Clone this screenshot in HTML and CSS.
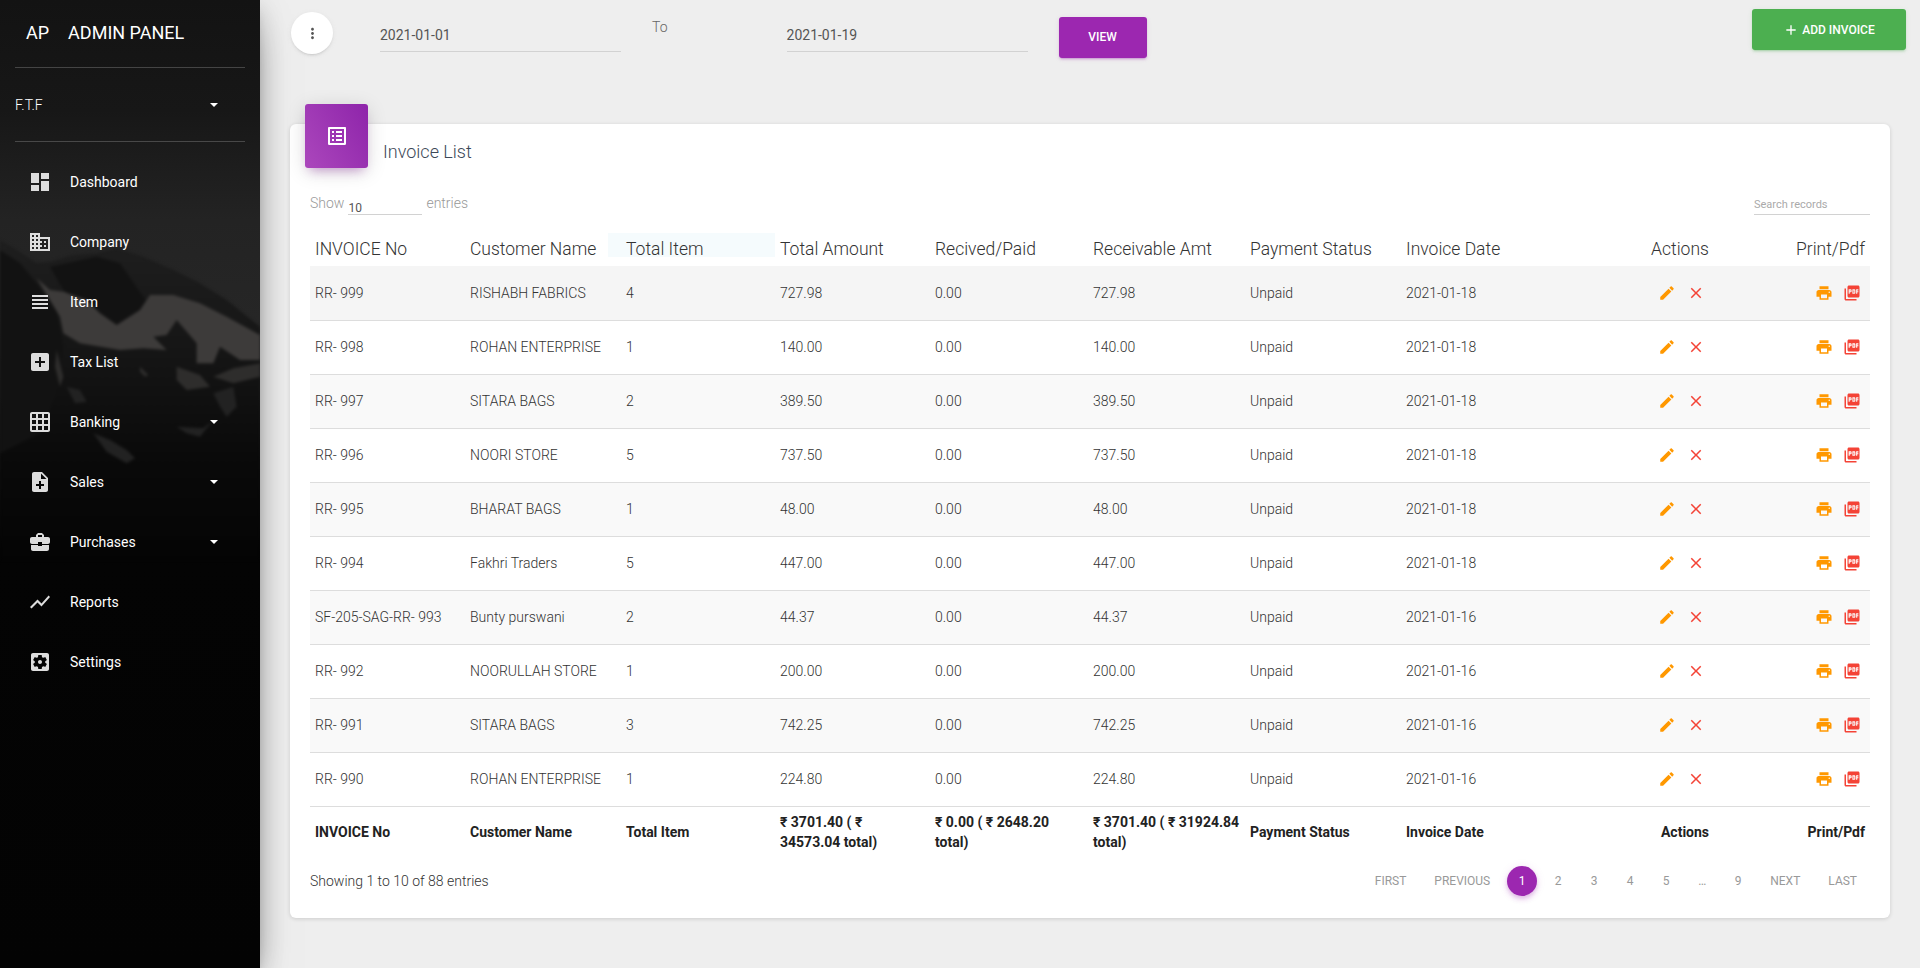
FILE: index.html
```html
<!DOCTYPE html>
<html>
<head>
    <meta charset="UTF-8">
    <meta name="viewport" content="width=device-width, initial-scale=1.0">
    <title>Invoice List</title>
    <link rel="stylesheet" href="styles.css">
</head>
<body>
    <!-- Iconos usados en toda la pagina -->
    <svg class="icon-defs" width="0" height="0">
        <defs>
            <linearGradient id="rock-fade" x1="0" y1="0" x2="0" y2="1">
                <stop offset="0" stop-color="#1e1e1e"/>
                <stop offset="0.35" stop-color="#151515"/>
                <stop offset="0.7" stop-color="#090909"/>
                <stop offset="1" stop-color="#040404"/>
            </linearGradient>
        </defs>
        <symbol id="i-dashboard" viewBox="0 0 24 24"><path d="M3 13h8V3H3v10zm0 8h8v-6H3v6zm10 0h8V11h-8v10zm0-18v6h8V3h-8z"/></symbol>
        <symbol id="i-domain" viewBox="0 0 24 24"><path d="M12 7V3H2v18h20V7H12zM6 19H4v-2h2v2zm0-4H4v-2h2v2zm0-4H4V9h2v2zm0-4H4V5h2v2zm4 12H8v-2h2v2zm0-4H8v-2h2v2zm0-4H8V9h2v2zm0-4H8V5h2v2zm10 12h-8v-2h2v-2h-2v-2h2v-2h-2V9h8v10zm-2-8h-2v2h2v-2zm0 4h-2v2h2v-2z"/></symbol>
        <symbol id="i-headline" viewBox="0 0 24 24"><path d="M4 15h16v-2H4v2zm0 4h16v-2H4v2zm0-8h16V9H4v2zm0-6v2h16V5H4z"/></symbol>
        <symbol id="i-addbox" viewBox="0 0 24 24"><path d="M19 3H5c-1.11 0-2 .9-2 2v14c0 1.1.89 2 2 2h14c1.1 0 2-.9 2-2V5c0-1.1-.9-2-2-2zm-2 10h-4v4h-2v-4H7v-2h4V7h2v4h4v2z"/></symbol>
        <symbol id="i-grid" viewBox="0 0 24 24"><path d="M20 2H4c-1.1 0-2 .9-2 2v16c0 1.1.9 2 2 2h16c1.1 0 2-.9 2-2V4c0-1.1-.9-2-2-2zM8 20H4v-4h4v4zm0-6H4v-4h4v4zm0-6H4V4h4v4zm6 12h-4v-4h4v4zm0-6h-4v-4h4v4zm0-6h-4V4h4v4zm6 12h-4v-4h4v4zm0-6h-4v-4h4v4zm0-6h-4V4h4v4z"/></symbol>
        <symbol id="i-noteadd" viewBox="0 0 24 24"><path d="M14 2H6c-1.1 0-1.99.9-1.99 2L4 20c0 1.1.89 2 1.99 2H18c1.1 0 2-.9 2-2V8l-6-6zm2 14h-3v3h-2v-3H8v-2h3v-3h2v3h3v2zm-3-7V3.5L18.5 9H13z"/></symbol>
        <symbol id="i-case" viewBox="0 0 24 24"><path d="M10 16v-1H3.01L3 19c0 1.11.89 2 2 2h14c1.11 0 2-.89 2-2v-4h-7v1h-4zm10-9h-4.01V5l-2-2h-4l-2 2v2H4c-1.1 0-2 .9-2 2v3c0 1.11.89 2 2 2h6v-2h4v2h6c1.1 0 2-.9 2-2V9c0-1.1-.9-2-2-2zm-6 0h-4V5h4v2z"/></symbol>
        <symbol id="i-chart" viewBox="0 0 24 24"><path d="M3.5 18.49l6-6.01 4 4L22 6.92l-1.41-1.41-7.09 7.97-4-4L2 16.99z"/></symbol>
        <symbol id="i-settings" viewBox="0 0 24 24"><path d="M12 10c-1.1 0-2 .9-2 2s.9 2 2 2 2-.9 2-2-.9-2-2-2zm7-7H5c-1.11 0-2 .9-2 2v14c0 1.1.89 2 2 2h14c1.11 0 2-.9 2-2V5c0-1.1-.89-2-2-2zm-1.75 9c0 .23-.02.46-.05.68l1.48 1.16c.13.11.17.3.08.45l-1.4 2.42c-.09.15-.27.21-.43.15l-1.74-.7c-.36.28-.76.51-1.18.69l-.26 1.85c-.03.17-.18.3-.35.3h-2.8c-.17 0-.32-.13-.35-.29l-.26-1.85c-.43-.18-.82-.41-1.18-.69l-1.74.7c-.16.06-.34 0-.43-.15l-1.4-2.42c-.09-.15-.05-.34.08-.45l1.48-1.16c-.03-.23-.05-.46-.05-.69 0-.23.02-.46.05-.68l-1.48-1.16c-.13-.11-.17-.3-.08-.45l1.4-2.42c.09-.15.27-.21.43-.15l1.74.7c.36-.28.76-.51 1.18-.69l.26-1.85c.03-.17.18-.3.35-.3h2.8c.17 0 .32.13.35.29l.26 1.85c.43.18.82.41 1.18.69l1.74-.7c.16-.06.34 0 .43.15l1.4 2.42c.09.15.05.34-.08.45l-1.48 1.16c.03.23.05.46.05.69z"/></symbol>
        <symbol id="i-more" viewBox="0 0 24 24"><path d="M12 8c1.1 0 2-.9 2-2s-.9-2-2-2-2 .9-2 2 .9 2 2 2zm0 2c-1.1 0-2 .9-2 2s.9 2 2 2 2-.9 2-2-.9-2-2-2zm0 6c-1.1 0-2 .9-2 2s.9 2 2 2 2-.9 2-2-.9-2-2-2z"/></symbol>
        <symbol id="i-listalt" viewBox="0 0 24 24"><path d="M19 5v14H5V5h14m1.1-2H3.9c-.5 0-.9.4-.9.9v16.2c0 .4.4.9.9.9h16.2c.4 0 .9-.5.9-.9V3.9c0-.5-.5-.9-.9-.9zM11 7h6v2h-6V7zm0 4h6v2h-6v-2zm0 4h6v2h-6zM7 7h2v2H7zm0 4h2v2H7zm0 4h2v2H7z"/></symbol>
        <symbol id="i-edit" viewBox="0 0 24 24"><path d="M3 17.25V21h3.75L17.81 9.94l-3.75-3.75L3 17.25zM20.71 7.04c.39-.39.39-1.02 0-1.41l-2.34-2.34c-.39-.39-1.02-.39-1.41 0l-1.83 1.83 3.75 3.75 1.83-1.83z"/></symbol>
        <symbol id="i-close" viewBox="0 0 24 24"><path d="M19 6.41L17.59 5 12 10.59 6.41 5 5 6.41 10.59 12 5 17.59 6.41 19 12 13.41 17.59 19 19 17.59 13.41 12z"/></symbol>
        <symbol id="i-print" viewBox="0 0 24 24"><path d="M19 8H5c-1.66 0-3 1.34-3 3v6h4v4h12v-4h4v-6c0-1.66-1.34-3-3-3zm-3 11H8v-5h8v5zm3-7c-.55 0-1-.45-1-1s.45-1 1-1 1 .45 1 1-.45 1-1 1zm-1-9H6v4h12V3z"/></symbol>
        <symbol id="i-pdf" viewBox="0 0 24 24"><path d="M20 2H8c-1.1 0-2 .9-2 2v12c0 1.1.9 2 2 2h12c1.1 0 2-.9 2-2V4c0-1.1-.9-2-2-2zm-8.5 7.5c0 .83-.67 1.5-1.5 1.5H9v2H7.5V7H10c.83 0 1.5.67 1.5 1.5v1zm5 2c0 .83-.67 1.5-1.5 1.5h-2.5V7H15c.83 0 1.5.67 1.5 1.5v3zm4-3H19v1h1.5V11H19v2h-1.5V7h3v1.5zM9 9.5h1v-1H9v1zM4 6H2v14c0 1.1.9 2 2 2h14v-2H4V6zm10 5.5h1v-3h-1v3z"/></symbol>
        <symbol id="i-add" viewBox="0 0 24 24"><path d="M19 13h-6v6h-2v-6H5v-2h6V5h2v6h6v2z"/></symbol>
    </svg>

    <div class="wrapper">
        <aside class="sidebar">
            <!-- Montana de fondo -->
            <svg class="sidebar-bg" viewBox="0 0 780 1020">
                <polygon fill="url(#rock-fade)" points="0,60 50,90 110,130 150,125 220,105 290,100 350,85 430,110 520,150 600,190 680,240 780,320 780,1020 0,1020"/>
                <polygon class="rock-dark" points="0,90 60,130 110,190 170,270 190,380 170,520 120,640 0,700"/>
                <polygon class="rock-dark" points="150,140 290,110 360,130 450,260 350,315 300,280 190,210"/>
                <polygon class="snow" points="110,175 150,210 190,215 260,240 300,280 350,315 420,270 450,225 520,225 600,250 680,290 780,345 780,420 720,420 660,380 640,430 590,430 590,370 530,300 500,345 460,350 500,390 430,385 360,390 240,370 190,340 180,290"/>
                <polygon class="snow-dim" points="640,470 700,445 780,430 780,470 700,490 670,480"/>
                <polygon class="snow-dim" points="530,440 600,465 630,500 560,510 530,480"/>
                <polygon class="snow-dim" points="170,390 190,470 180,500 165,440"/>
                <polygon class="snow-faint" points="200,500 240,510 260,545 225,550"/>
                <polygon class="snow-dim" points="420,440 445,465 435,470 420,455"/>
                <polygon class="snow-faint" points="280,640 330,660 380,690 405,715 380,730 320,695"/>
                <polygon class="snow-faint" points="640,520 700,500 710,560 680,590 660,560"/>
                <polygon class="snow-faint" points="530,620 610,625 640,600 600,650 560,640"/>
            </svg>
            <div class="sidebar-content">
                <div class="brand">
                    <span class="brand-mini">AP</span>
                    <span>ADMIN PANEL</span>
                </div>
                <div class="user-row">
                    <span>F.T.F</span>
                    <span class="caret"></span>
                </div>
                <nav class="nav">
                    <a class="nav-item"><svg class="nav-icon"><use href="#i-dashboard"/></svg><span>Dashboard</span></a>
                    <a class="nav-item"><svg class="nav-icon"><use href="#i-domain"/></svg><span>Company</span></a>
                    <a class="nav-item"><svg class="nav-icon"><use href="#i-headline"/></svg><span>Item</span></a>
                    <a class="nav-item"><svg class="nav-icon"><use href="#i-addbox"/></svg><span>Tax List</span></a>
                    <a class="nav-item"><svg class="nav-icon"><use href="#i-grid"/></svg><span>Banking</span><span class="caret"></span></a>
                    <a class="nav-item"><svg class="nav-icon"><use href="#i-noteadd"/></svg><span>Sales</span><span class="caret"></span></a>
                    <a class="nav-item"><svg class="nav-icon"><use href="#i-case"/></svg><span>Purchases</span><span class="caret"></span></a>
                    <a class="nav-item"><svg class="nav-icon"><use href="#i-chart"/></svg><span>Reports</span></a>
                    <a class="nav-item"><svg class="nav-icon"><use href="#i-settings"/></svg><span>Settings</span></a>
                </nav>
            </div>
        </aside>

        <main class="main">
            <div class="toolbar">
                <button class="round-btn"><svg class="more-icon"><use href="#i-more"/></svg></button>
                <div class="date-field">2021-01-01</div>
                <span class="to-label">To</span>
                <div class="date-field date-field-2">2021-01-19</div>
                <button class="view-btn">View</button>
                <button class="add-btn"><svg class="add-icon"><use href="#i-add"/></svg>Add Invoice</button>
            </div>

            <section class="card">
                <div class="card-badge"><svg class="badge-icon"><use href="#i-listalt"/></svg></div>
                <h4 class="card-title">Invoice List</h4>

                <div class="table-controls">
                    <div class="length-control">
                        <span>Show</span>
                        <span class="length-select">10</span>
                        <span>entries</span>
                    </div>
                    <div class="search-box">Search records</div>
                </div>

                <table class="invoice-table">
                    <colgroup>
                        <col class="col-a"><col class="col-b"><col class="col-c"><col class="col-d"><col class="col-e"><col class="col-f"><col class="col-g"><col class="col-h"><col class="col-i"><col class="col-j">
                    </colgroup>
                    <thead>
                        <tr>
                            <th>INVOICE No</th>
                            <th>Customer Name</th>
                            <th class="th-sorted">Total Item</th>
                            <th>Total Amount</th>
                            <th>Recived/Paid</th>
                            <th>Receivable Amt</th>
                            <th>Payment Status</th>
                            <th>Invoice Date</th>
                            <th class="center">Actions</th>
                            <th class="right">Print/Pdf</th>
                        </tr>
                    </thead>
                    <tbody>
                        <tr class="row-hover">
                            <td>RR- 999</td><td>RISHABH FABRICS</td><td>4</td><td>727.98</td><td>0.00</td><td>727.98</td><td>Unpaid</td><td>2021-01-18</td>
                            <td class="center act-cell"><svg class="act act-edit"><use href="#i-edit"/></svg><svg class="act act-close"><use href="#i-close"/></svg></td>
                            <td class="right"><svg class="act act-print"><use href="#i-print"/></svg><svg class="act act-pdf"><use href="#i-pdf"/></svg></td>
                        </tr>
                        <tr>
                            <td>RR- 998</td><td>ROHAN ENTERPRISE</td><td>1</td><td>140.00</td><td>0.00</td><td>140.00</td><td>Unpaid</td><td>2021-01-18</td>
                            <td class="center act-cell"><svg class="act act-edit"><use href="#i-edit"/></svg><svg class="act act-close"><use href="#i-close"/></svg></td>
                            <td class="right"><svg class="act act-print"><use href="#i-print"/></svg><svg class="act act-pdf"><use href="#i-pdf"/></svg></td>
                        </tr>
                        <tr>
                            <td>RR- 997</td><td>SITARA BAGS</td><td>2</td><td>389.50</td><td>0.00</td><td>389.50</td><td>Unpaid</td><td>2021-01-18</td>
                            <td class="center act-cell"><svg class="act act-edit"><use href="#i-edit"/></svg><svg class="act act-close"><use href="#i-close"/></svg></td>
                            <td class="right"><svg class="act act-print"><use href="#i-print"/></svg><svg class="act act-pdf"><use href="#i-pdf"/></svg></td>
                        </tr>
                        <tr>
                            <td>RR- 996</td><td>NOORI STORE</td><td>5</td><td>737.50</td><td>0.00</td><td>737.50</td><td>Unpaid</td><td>2021-01-18</td>
                            <td class="center act-cell"><svg class="act act-edit"><use href="#i-edit"/></svg><svg class="act act-close"><use href="#i-close"/></svg></td>
                            <td class="right"><svg class="act act-print"><use href="#i-print"/></svg><svg class="act act-pdf"><use href="#i-pdf"/></svg></td>
                        </tr>
                        <tr>
                            <td>RR- 995</td><td>BHARAT BAGS</td><td>1</td><td>48.00</td><td>0.00</td><td>48.00</td><td>Unpaid</td><td>2021-01-18</td>
                            <td class="center act-cell"><svg class="act act-edit"><use href="#i-edit"/></svg><svg class="act act-close"><use href="#i-close"/></svg></td>
                            <td class="right"><svg class="act act-print"><use href="#i-print"/></svg><svg class="act act-pdf"><use href="#i-pdf"/></svg></td>
                        </tr>
                        <tr>
                            <td>RR- 994</td><td>Fakhri Traders</td><td>5</td><td>447.00</td><td>0.00</td><td>447.00</td><td>Unpaid</td><td>2021-01-18</td>
                            <td class="center act-cell"><svg class="act act-edit"><use href="#i-edit"/></svg><svg class="act act-close"><use href="#i-close"/></svg></td>
                            <td class="right"><svg class="act act-print"><use href="#i-print"/></svg><svg class="act act-pdf"><use href="#i-pdf"/></svg></td>
                        </tr>
                        <tr>
                            <td>SF-205-SAG-RR- 993</td><td>Bunty purswani</td><td>2</td><td>44.37</td><td>0.00</td><td>44.37</td><td>Unpaid</td><td>2021-01-16</td>
                            <td class="center act-cell"><svg class="act act-edit"><use href="#i-edit"/></svg><svg class="act act-close"><use href="#i-close"/></svg></td>
                            <td class="right"><svg class="act act-print"><use href="#i-print"/></svg><svg class="act act-pdf"><use href="#i-pdf"/></svg></td>
                        </tr>
                        <tr>
                            <td>RR- 992</td><td>NOORULLAH STORE</td><td>1</td><td>200.00</td><td>0.00</td><td>200.00</td><td>Unpaid</td><td>2021-01-16</td>
                            <td class="center act-cell"><svg class="act act-edit"><use href="#i-edit"/></svg><svg class="act act-close"><use href="#i-close"/></svg></td>
                            <td class="right"><svg class="act act-print"><use href="#i-print"/></svg><svg class="act act-pdf"><use href="#i-pdf"/></svg></td>
                        </tr>
                        <tr>
                            <td>RR- 991</td><td>SITARA BAGS</td><td>3</td><td>742.25</td><td>0.00</td><td>742.25</td><td>Unpaid</td><td>2021-01-16</td>
                            <td class="center act-cell"><svg class="act act-edit"><use href="#i-edit"/></svg><svg class="act act-close"><use href="#i-close"/></svg></td>
                            <td class="right"><svg class="act act-print"><use href="#i-print"/></svg><svg class="act act-pdf"><use href="#i-pdf"/></svg></td>
                        </tr>
                        <tr>
                            <td>RR- 990</td><td>ROHAN ENTERPRISE</td><td>1</td><td>224.80</td><td>0.00</td><td>224.80</td><td>Unpaid</td><td>2021-01-16</td>
                            <td class="center act-cell"><svg class="act act-edit"><use href="#i-edit"/></svg><svg class="act act-close"><use href="#i-close"/></svg></td>
                            <td class="right"><svg class="act act-print"><use href="#i-print"/></svg><svg class="act act-pdf"><use href="#i-pdf"/></svg></td>
                        </tr>
                    </tbody>
                    <tfoot>
                        <tr>
                            <td>INVOICE No</td>
                            <td>Customer Name</td>
                            <td>Total Item</td>
                            <td>₹ 3701.40 ( ₹ 34573.04 total)</td>
                            <td>₹ 0.00 ( ₹ 2648.20 total)</td>
                            <td>₹ 3701.40 ( ₹ 31924.84 total)</td>
                            <td>Payment Status</td>
                            <td>Invoice Date</td>
                            <td class="center foot-actions">Actions</td>
                            <td class="right">Print/Pdf</td>
                        </tr>
                    </tfoot>
                </table>

                <div class="table-bottom">
                    <span class="table-info">Showing 1 to 10 of 88 entries</span>
                    <div class="pagination">
                        <a class="page-link">First</a>
                        <a class="page-link">Previous</a>
                        <a class="page-link active">1</a>
                        <a class="page-link">2</a>
                        <a class="page-link">3</a>
                        <a class="page-link">4</a>
                        <a class="page-link">5</a>
                        <a class="page-link">…</a>
                        <a class="page-link">9</a>
                        <a class="page-link">Next</a>
                        <a class="page-link">Last</a>
                    </div>
                </div>
            </section>
        </main>
    </div>
</body>
</html>
```
FILE: styles.css
```css
/* Base */
* {
    box-sizing: border-box;
}

body {
    margin: 0;
    padding: 0;
    background: #eeeeee;
    font-family: Roboto, "Noto Sans", sans-serif;
    color: #3c4858;
    overflow: hidden;
}

.icon-defs {
    position: absolute;
}

.wrapper {
    display: flex;
    height: 968px;
}

/* Sidebar */
.sidebar {
    position: relative;
    width: 260px;
    flex-shrink: 0;
    background: linear-gradient(to bottom, #131313 0, #171717 110px, #232323 220px, #262626 320px, #040404 560px, #030303 100%);
    box-shadow: 0 16px 38px -12px rgba(0,0,0,.56), 0 4px 25px 0 rgba(0,0,0,.12), 0 8px 10px -5px rgba(0,0,0,.2);
    overflow: hidden;
    color: #fff;
}

.sidebar-bg {
    position: absolute;
    left: 0;
    top: 220px;
    width: 260px;
    height: 340px;
    filter: blur(1.5px);
}

.sidebar-bg .rock-dark {
    fill: #121212;
}

.sidebar-bg .snow {
    fill: #3d3b3a;
}

.sidebar-bg .snow-dim {
    fill: #2e2d2c;
}

.sidebar-bg .snow-faint {
    fill: #222222;
}

.sidebar-content {
    position: relative;
    padding: 0 15px;
}

.brand {
    display: flex;
    gap: 19px;
    height: 68px;
    padding: 0 0 2px 11px;
    align-items: center;
    font-size: 18px;
    border-bottom: 1px solid rgba(180,180,180,.3);
}

.user-row {
    display: flex;
    justify-content: space-between;
    align-items: center;
    height: 74px;
    padding: 0 27px 0 0;
    font-size: 14px;
    font-weight: 300;
    border-bottom: 1px solid rgba(180,180,180,.3);
}

.caret {
    width: 0;
    height: 0;
    border-top: 4px solid #fff;
    border-left: 4px solid transparent;
    border-right: 4px solid transparent;
}

.nav {
    display: flex;
    flex-direction: column;
    padding-top: 10px;
}

.nav-item {
    display: flex;
    align-items: center;
    height: 60px;
    padding: 0 27px 0 13px;
    font-size: 14px;
    color: #fff;
}

.nav-item .caret {
    margin-left: auto;
}

.nav-icon {
    width: 24px;
    height: 24px;
    margin-right: 18px;
    fill: #dddddd;
}

/* Barra superior */
.main {
    flex: 1;
    min-width: 0;
    padding: 0 16px 0 30px;
}

.toolbar {
    position: relative;
    display: flex;
    height: 124px;
    align-items: flex-start;
}

.round-btn {
    width: 42px;
    height: 42px;
    margin: 12px 1px 0 1px;
    padding: 0;
    border: none;
    border-radius: 50%;
    background: #fff;
    box-shadow: 0 2px 2px 0 rgba(153,153,153,.14), 0 3px 1px -2px rgba(153,153,153,.2), 0 1px 5px 0 rgba(153,153,153,.12);
}

.more-icon {
    display: block;
    width: 17px;
    height: 17px;
    margin: 0 auto;
    fill: #555;
}

.date-field {
    width: 241px;
    height: 41px;
    margin: 11px 0 0 46px;
    padding: 16px 0 0 0;
    font-size: 14px;
    font-weight: 400;
    color: #555;
    border-bottom: 1px solid #d2d2d2;
}

.to-label {
    margin: 19px 0 0 31px;
    font-size: 14px;
    font-weight: 300;
    color: #666;
}

.date-field-2 {
    margin-left: 119px;
}

.view-btn {
    width: 88px;
    height: 41px;
    margin: 17px 0 0 31px;
    padding: 0 0 2px;
    border: none;
    border-radius: 3px;
    background: #9c27b0;
    color: #fff;
    font: 500 12px Roboto, sans-serif;
    text-transform: uppercase;
    box-shadow: 0 2px 2px 0 rgba(156,39,176,.14), 0 3px 1px -2px rgba(156,39,176,.2), 0 1px 5px 0 rgba(156,39,176,.12);
}

.add-btn {
    display: flex;
    align-items: center;
    justify-content: center;
    width: 154px;
    height: 41px;
    margin: 9px -2px 0 auto;
    border: none;
    border-radius: 3px;
    background: #4caf50;
    color: #fff;
    font: 500 12px Roboto, sans-serif;
    text-transform: uppercase;
    box-shadow: 0 2px 2px 0 rgba(76,175,80,.14), 0 3px 1px -2px rgba(76,175,80,.2), 0 1px 5px 0 rgba(76,175,80,.12);
}

.add-icon {
    width: 16px;
    height: 16px;
    margin-right: 3px;
    fill: #fff;
}

/* Tarjeta */
.card {
    position: relative;
    z-index: 0;
    width: 1600px;
    height: 794px;
    padding: 0 20px;
    background: #fff;
    border-radius: 6px;
    box-shadow: 0 1px 4px 0 rgba(0,0,0,.14);
}

.card-badge {
    position: absolute;
    left: 15px;
    top: -20px;
    display: flex;
    align-items: center;
    justify-content: center;
    width: 63px;
    height: 64px;
    border-radius: 3px;
    background: linear-gradient(60deg, #ab47bc, #8e24aa);
    box-shadow: 0 4px 20px 0 rgba(0,0,0,.14), 0 7px 10px -5px rgba(156,39,176,.4);
}

.badge-icon {
    width: 24px;
    height: 24px;
    fill: #fff;
}

.card-title {
    margin: 0;
    padding: 17px 0 0 73px;
    height: 64px;
    font-size: 18px;
    font-weight: 300;
    color: #3c4858;
}

.table-controls {
    display: flex;
    justify-content: space-between;
    height: 43px;
    align-items: flex-start;
}

.length-control {
    display: flex;
    gap: 4px;
    font-size: 14px;
    font-weight: 300;
    color: #999;
    padding-top: 7px;
}

.length-select {
    width: 74px;
    height: 20px;
    padding-top: 6px;
    font-size: 12px;
    font-weight: 400;
    color: #555;
    border-bottom: 1px solid #d2d2d2;
}

.search-box {
    width: 116px;
    height: 27px;
    padding-top: 10px;
    font-size: 11px;
    color: #aaa;
    border-bottom: 1px solid #d2d2d2;
}

/* Tabla */
.invoice-table {
    width: 1560px;
    border-collapse: collapse;
    table-layout: fixed;
}

.col-a { width: 155px; }
.col-b { width: 156px; }
.col-c { width: 154px; }
.col-d { width: 155px; }
.col-e { width: 158px; }
.col-f { width: 157px; }
.col-g { width: 156px; }
.col-h { width: 209px; }
.col-i { width: 140px; }
.col-j { width: 120px; }

.invoice-table th {
    position: relative;
    height: 35px;
    padding: 0 5px;
    font-size: 17.5px;
    font-weight: 300;
    text-align: left;
    color: #333;
    white-space: nowrap;
}

.th-sorted::before {
    content: "";
    position: absolute;
    left: -13px;
    right: 0;
    top: 2px;
    height: 24px;
    background: #f5fbfd;
    z-index: -1;
}

.invoice-table td {
    padding: 0 5px;
    font-size: 14px;
    font-weight: 300;
    color: #333;
}

.invoice-table tbody tr {
    height: 54px;
    border-bottom: 1px solid #ddd;
}

.invoice-table tbody tr:nth-child(odd) {
    background: #f9f9f9;
}

.invoice-table tbody tr.row-hover {
    background: #f5f5f5;
}

.invoice-table tfoot tr {
    height: 50px;
}

.invoice-table tfoot td {
    padding: 5px;
    font-weight: 700;
    line-height: 20px;
    color: #222;
}

.invoice-table td.foot-actions {
    padding-left: 15px;
}

.invoice-table td.act-cell {
    padding-left: 8px;
}

.invoice-table .center {
    text-align: center;
}

.invoice-table .right {
    text-align: right;
}

.act {
    width: 18px;
    height: 18px;
    vertical-align: middle;
}

.act-edit, .act-print {
    fill: #ff9800;
}

.act-close, .act-pdf {
    fill: #f44336;
}

.act-edit {
    margin-right: 11px;
}

.act-print {
    margin-right: 10px;
}

.act-pdf {
    margin-right: 4px;
}

.table-bottom {
    display: flex;
    justify-content: space-between;
    align-items: center;
    margin-top: 9px;
}

.table-info {
    font-size: 14px;
    font-weight: 300;
    color: #333;
}

.pagination {
    display: flex;
    align-items: center;
    gap: 6px;
    padding-right: 2px;
}

.page-link {
    min-width: 30px;
    height: 30px;
    padding: 0 11px;
    line-height: 30px;
    border-radius: 30px;
    text-align: center;
    font-size: 12px;
    font-weight: 400;
    color: #999;
    text-transform: uppercase;
}

.page-link.active {
    background: #9c27b0;
    color: #fff;
    box-shadow: 0 4px 5px 0 rgba(156,39,176,.14), 0 1px 10px 0 rgba(156,39,176,.12), 0 2px 4px -1px rgba(156,39,176,.2);
}
```
